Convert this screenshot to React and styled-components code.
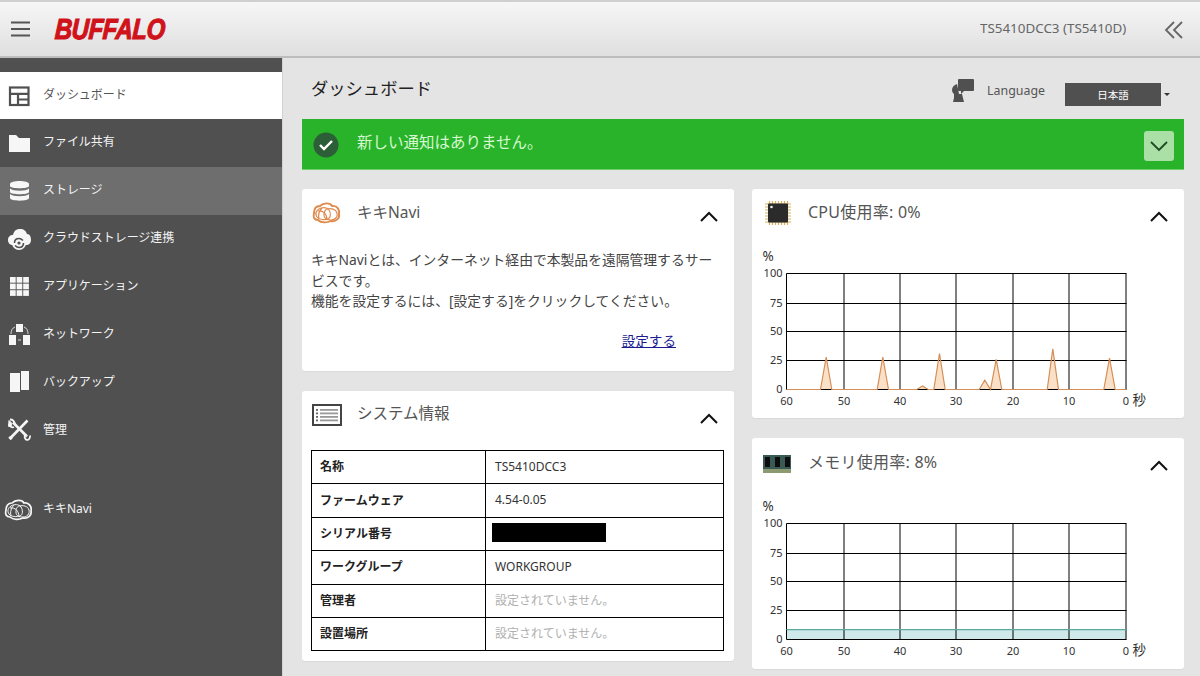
import React from 'react';
import styled, { createGlobalStyle } from 'styled-components';

const Global = createGlobalStyle`
  html, body { margin: 0; padding: 0; background: #e4e4e4; }
  body { font-family: "Noto Sans", "Noto Sans CJK JP", sans-serif; overflow: hidden; }
  * { box-sizing: border-box; }
`;

const Page = styled.div`
  width: 1200px; height: 676px; overflow: hidden;
  display: flex; flex-direction: column; background: #e4e4e4;
`;
const Header = styled.header`
  height: 58px; flex: none;
  display: flex; align-items: center;
  padding: 0 16px 0 11px;
  background: linear-gradient(#f6f6f6, #dfdfdf);
  border-top: 2px solid #cfcfcf;
  border-bottom: 2px solid #bdbdbd;
`;
const Burger = styled.svg`width: 19px; height: 16px; flex: none; margin-right: 25px;`;
const Logo = styled.span`
  font: italic 700 29px "Liberation Sans", sans-serif;
  color: #d0121b;
  -webkit-text-stroke: 1.2px #d0121b;
  letter-spacing: -0.4px;
  display: inline-block;
  transform-origin: left center;
  transform: scaleX(0.82) skewX(-4deg);
  width: 113px;
  white-space: nowrap;
`;
const Device = styled.div`
  margin-left: auto; margin-right: 38px; margin-top: -3px;
  width: 146px; overflow: hidden; white-space: nowrap;
  font-size: 13.4px; color: #666;
`;
const Collapse = styled.svg`width: 20px; height: 20px; flex: none; margin-top: 2px;`;
const Body = styled.div`flex: 1; display: flex; min-height: 0;`;
const Side = styled.nav`
  width: 283px; flex: none; background: #505050;
  border-right: 1px solid #d2d2d2;
  padding-top: 14px;
`;
const NavItem = styled.div`
  height: ${p => p.$active ? 47 : 48}px;
  display: flex; align-items: center; gap: 9px; padding-left: 4px;
  font-size: 12px; letter-spacing: -0.05px;
  background: ${p => p.$active ? '#fff' : p.$hover ? '#6e6e6e' : 'transparent'};
  color: ${p => p.$active ? '#555' : '#f4f4f4'};
`;
const NavLabel = styled.span`margin-bottom: 4px;`;
const NavGap = styled.div`height: 31px;`;
const IconSlot = styled.svg`width: 30px; height: 26px; flex: none;`;
const Main = styled.main`flex: 1; padding: 0 16px 0 19px; min-width: 0;`;
const TitleRow = styled.div`
  height: 61px; display: flex; align-items: center; padding: 0 14px 2px 9px;
`;
const Title = styled.h1`
  margin: 0; font-size: 17.3px; font-weight: 400; color: #222; flex: 1;
`;
const LangIcon = styled.svg`width: 22px; height: 23px; margin-right: 13px; margin-top: 5px;`;
const LangLabel = styled.span`font-size: 12.4px; color: #555; margin-right: 20px; margin-top: 5px;`;
const LangSelect = styled.div`
  width: 96px; height: 23px; background: #505050; color: #fff;
  font-size: 10.5px; display: flex; align-items: center; justify-content: center; margin-top: 14px;
`;
const Caret = styled.span`
  width: 0; height: 0; margin: 14px 0 0 3px;
  border-left: 3.5px solid transparent; border-right: 3.5px solid transparent; border-top: 3px solid #333;
`;
const Banner = styled.div`
  height: 51px; background: #28b32a; border-bottom: 1px solid #6fd06a;
  display: flex; align-items: center; padding: 0 10px 0 11px; color: #d6f7cf;
  font-size: 15.5px;
`;
const BannerText = styled.span`margin-left: 18px; margin-bottom: 6px; flex: 1;`;
const Check = styled.svg`width: 26px; height: 26px; flex: none; margin-top: 1px;`;
const Toggle = styled.div`
  width: 30px; height: 30px; background: #aadfa6; border-radius: 3px;
  display: flex; align-items: center; justify-content: center; margin-top: 3px;
`;
const Columns = styled.div`display: grid; grid-template-columns: 432px 432px; gap: 18px; margin-top: 19px;`;
const Col = styled.div`display: flex; flex-direction: column; gap: 20px;`;
const Card = styled.section`
  background: #fff; border-radius: 3px; box-shadow: 0 1px 1px rgba(0,0,0,.05);
  height: ${p => p.$h}px; overflow: hidden;
`;
const CardHead = styled.div`
  height: ${p => p.$h || 48}px; display: flex; padding: 0 14px 0 10px;
  align-items: flex-start;
`;
const CardIcon = styled.svg`width: 30px; height: 24px; flex: none; margin-top: 12px;`;
const CardTitle = styled.h2`
  margin: ${p => p.$top ?? 11}px 0 0 ${p => p.$wide ? 16 : 15}px;
  font-size: ${p => p.$wide ? 16 : 15.5}px;
  letter-spacing: ${p => p.$wide ? 0.25 : 0}px;
  font-weight: 400; color: #555; flex: 1; line-height: 24px;
`;
const Chevron = styled.svg`width: 22px; height: 14px; flex: none; margin-top: 20px;`;
const Para = styled.p`
  margin: 0; padding: 13px 14px 0 9px; font-size: 13.8px; line-height: 20.5px; color: #444;
`;
const LinkRow = styled.div`text-align: right; padding: 19.5px 58px 0 0; font-size: 13.6px; line-height: 20px;`;
const LinkText = styled.a`color: #1b1b8f; text-decoration: underline;`;
const Table = styled.table`
  border-collapse: collapse; margin-left: 9px; width: 413px; table-layout: fixed; font-size: 12px;
`;
const Row = styled.tr`height: 33.4px;`;
const Th = styled.th`
  width: 174px; border: 1px solid #000; text-align: left; padding: 0 0 2px 8px; font-weight: 700; color: #222;
`;
const Td = styled.td`
  border: 1px solid #000; padding: 0 0 2px 9px; color: ${p => p.$muted ? '#b0b0b0' : '#333'};
`;
const Redact = styled.div`width: 114px; height: 19px; background: #000; margin-left: -3px; margin-bottom: 1px;`;
const ChartSvg = styled.svg`display: block; width: 432px;`;
const AxisText = styled.text`font: 11px "Noto Sans", sans-serif; fill: #333;`;
const UnitText = styled.text`font: 13.5px "Noto Sans", "Noto Sans CJK JP", sans-serif; fill: #333;`;

const W = '#f6f6f6';
const D = '#505050';

const Knot = ({ c, w = 1 }) => (
  <g fill="none" stroke={c} strokeWidth={w}>
    <path d="M8 4c3-3 10-4 12 0 5-1 8 4 7 8 1 4-3 8-8 7-4 2-10 2-13-1-4 0-5-3-4-7 0-4 2-7 6-7z" strokeWidth={w + .7} />
    <path d="M7 7c3-2 8-2 10 1s2 8-1 9-9 1-11-2-1-6 2-8z" />
    <path d="M15 7c4-1 9 0 10 4s-2 7-6 7-7-1-7-5 1-5 3-6z" />
    <path d="M6 9c5-1 9 3 9 9M10 6c-3 3-4 7-3 11" />
  </g>
);

const Cloud = () => (
  <g>
    <path fill={W} d="M9 19c-3 0-5-2-5-5 0-3 2-5 5-5 1-4 3-6 7-6s6 2 7 5c3 0 4 3 4 6s-2 5-5 5z" />
    <circle cx="15" cy="17" r="7" fill={W} />
    <path fill="none" stroke={D} strokeWidth="1.6" d="M10.5 17c0-3 2-4.5 4.5-4.5 2 0 3 1 4 2M19.5 17c0 3-2 4.5-4.5 4.5-2 0-3-1-4-2" />
    <circle cx="15" cy="17" r="1.6" fill={D} />
  </g>
);

const Tools = () => (
  <g fill="none" stroke={W}>
    <path d="M23.5 2.5L7 19.5" strokeWidth="2.6" />
    <path d="M7.5 19L5.5 21" strokeWidth="3.4" />
    <path d="M9 4.5L23 18.5" strokeWidth="2.6" />
    <path d="M5 2.5l2.8 2.8-.6 2.6-2.6.6L5 2.5" fill={W} strokeWidth="1" />
    <path d="M11 6.5C10.5 3.5 8.5 1.5 6 1.5M5 6c.5 2.5 3 4 5 3" strokeWidth="1.8" />
    <path d="M26 17.5c.5 2.5-1 4.5-3.5 4.5M21.5 16.5c-1.500 1.500-1 4 1 5.500" strokeWidth="1.8" />
  </g>
);

const icons = {
  dash: <g fill="none" stroke={D} strokeWidth="2.2"><rect x="6" y="4.500" width="18.500" height="17.500" /><path d="M6 10.800h18.500M14 10.800V22M14 16.500h10.500" /></g>,
  folder: <path fill={W} d="M5 5h7l3 3h11v14H5z" />,
  db: <g fill={W}><path d="M6 6c0-4 19-4 19 0v2c0 3-19 3-19 0z" /><path d="M6 10.500c3 3 16 3 19 0v3.500c0 3-19 3-19 0z" /><path d="M6 16c3 3 16 3 19 0v4c0 3.500-19 3.500-19 0z" /></g>,
  cloud: <Cloud />,
  grid: <g fill={W}>{[0, 1, 2].flatMap(r => [0, 1, 2].map(c => <rect key={r + '-' + c} x={6 + c * 6.6} y={3 + r * 6.6} width="5.7" height="5.7" />))}</g>,
  net: <g><rect fill={W} x="12" y="2" width="7" height="8" /><rect fill={W} x="5" y="13" width="7" height="10" /><rect fill={W} x="19" y="13" width="7" height="10" /><path fill="none" stroke={W} strokeWidth=".8" d="M11 5c-3 1-4 4-4 7M20 5c3 1 4 4 4 7M14 18h3" /></g>,
  backup: <g fill={W}><rect x="6" y="3" width="10" height="19" /><rect x="17" y="1" width="8" height="19" /></g>,
  tools: <Tools />,
  knot: <g transform="translate(0 2)"><Knot c={W} /></g>,
};

const NAV = [
  ['dash', 'ダッシュボード', { $active: true }],
  ['folder', 'ファイル共有', {}],
  ['db', 'ストレージ', { $hover: true }],
  ['cloud', 'クラウドストレージ連携', {}],
  ['grid', 'アプリケーション', {}],
  ['net', 'ネットワーク', {}],
  ['backup', 'バックアップ', {}],
  ['tools', '管理', {}],
];

const NavEntry = ({ icon, label, ...p }) => (
  <NavItem {...p}>
    <IconSlot viewBox="0 0 30 26">{icons[icon]}</IconSlot>
    <NavLabel>{label}</NavLabel>
  </NavItem>
);

const Up = () => <Chevron viewBox="0 0 22 14"><path d="M3 12l8-8 8 8" fill="none" stroke="#111" strokeWidth="2" /></Chevron>;

const GX = [0, 57.5, 113.5, 169.5, 226.5, 282.5, 339.5];
const LX = ['60', '50', '40', '30', '20', '10', '0'];
const GY = [0, 30, 58, 87, 116];
const LY = ['100', '75', '50', '25', '0'];

const Chart = ({ values, line, fill, height }) => {
  const x0 = 34.5;
  const plotTop = 36;
  const pts = values.map((v, i) => [(i * 340) / 60, 116 - (v / 100) * 116]);
  const path = pts.map(p => p[0].toFixed(1) + ',' + p[1].toFixed(1)).join(' ');
  return (
    <ChartSvg viewBox={`0 0 432 ${height}`} height={height}>
      <g transform={`translate(${x0} ${plotTop + .5})`}>
        <polygon points={`0,116 ${path} 340,116`} fill={fill} />
        <g stroke="#000" strokeWidth="1" fill="none">
          {GX.map(x => <line key={x} x1={x} x2={x} y1="0" y2="116" />)}
          {GY.map(y => <line key={y} x1="0" x2="340" y1={y} y2={y} />)}
        </g>
        <polyline points={path} fill="none" stroke={line} strokeWidth="1.2" />
        {GY.map((y, i) => <AxisText key={i} x="-4" y={y + 3} textAnchor="end">{LY[i]}</AxisText>)}
        {GX.map((x, i) => <AxisText key={i} x={x} y="131" textAnchor="middle">{LX[i]}</AxisText>)}
        <UnitText x="-24" y="-13">%</UnitText>
        <UnitText x="346" y="131">秒</UnitText>
      </g>
    </ChartSvg>
  );
};

const peaks = { 53: 28, 43: 28, 36: 3, 33: 31, 25: 8, 23: 26, 13: 35, 3: 27 };
const cpu = Array.from({ length: 61 }, (_, i) => peaks[60 - i] || 0);
const mem = Array.from({ length: 61 }, () => 8.5);

const RowsData = [
  ['名称', 'TS5410DCC3'],
  ['ファームウェア', '4.54-0.05'],
  ['シリアル番号', null],
  ['ワークグループ', 'WORKGROUP'],
  ['管理者', '設定されていません。', true],
  ['設置場所', '設定されていません。', true],
];

const PINS = [0, 1, 2, 3, 4, 5, 6];

export default function App() {
  return (
    <Page>
      <Global />
      <Header>
        <Burger viewBox="0 0 19 16"><path d="M0 1.5h19M0 8h19M0 14.5h19" stroke="#555" strokeWidth="2" /></Burger>
        <Logo>BUFFALO</Logo>
        <Device>TS5410DCC3 (TS5410D)</Device>
        <Collapse viewBox="0 0 20 20"><path d="M10 2L2 10l8 8M18 2l-8 8 8 8" fill="none" stroke="#666" strokeWidth="1.8" /></Collapse>
      </Header>
      <Body>
        <Side>
          {NAV.map(([ic, label, p]) => <NavEntry key={label} icon={ic} label={label} {...p} />)}
          <NavGap />
          <NavEntry icon="knot" label="キキNavi" />
        </Side>
        <Main>
          <TitleRow>
            <Title>ダッシュボード</Title>
            <LangIcon viewBox="0 0 22 23">
              <path fill={D} d="M7 0h14a1 1 0 0 1 1 1v10a1 1 0 0 1-1 1H12l-3 3v-3H7a1 1 0 0 1-1-1V1a1 1 0 0 1 1-1z" />
              <path fill={D} d="M5 5C2 6 0 8 0 11c0 2 1 3 2 4v4l-1 4h11l-1-4-1-4H7z" />
            </LangIcon>
            <LangLabel>Language</LangLabel>
            <LangSelect>日本語</LangSelect>
            <Caret />
          </TitleRow>
          <Banner>
            <Check viewBox="0 0 26 26"><circle cx="13" cy="13" r="12.500" fill="#2c5f37" /><path d="M7 13l4 4 8-8" fill="none" stroke="#fff" strokeWidth="2.400" /></Check>
            <BannerText>新しい通知はありません。</BannerText>
            <Toggle><svg width="20" height="12" viewBox="0 0 20 12"><path d="M2 2l8 8 8-8" fill="none" stroke="#1d4a22" strokeWidth="1.800" /></svg></Toggle>
          </Banner>
          <Columns>
            <Col>
              <Card $h={182}>
                <CardHead>
                  <CardIcon viewBox="0 0 30 22"><Knot c="#e08a4c" w={1.2} /></CardIcon>
                  <CardTitle>キキNavi</CardTitle>
                  <Up />
                </CardHead>
                <Para>
                  キキNaviとは、インターネット経由で本製品を遠隔管理するサービスです。<br />
                  機能を設定するには、[設定する]をクリックしてください。
                </Para>
                <LinkRow><LinkText>設定する</LinkText></LinkRow>
              </Card>
              <Card $h={270}>
                <CardHead $h={59}>
                  <CardIcon viewBox="0 0 30 22">
                    <rect x="1" y="1" width="28" height="20" fill="#fff" stroke="#444" strokeWidth="2" />
                    {[5, 8.5, 12, 15.5].map(y => <g key={y}><rect x="4" y={y} width="2" height="1.8" fill="#666" /><rect x="8" y={y} width="18" height="1.8" fill="#999" /></g>)}
                  </CardIcon>
                  <CardTitle $top={10}>システム情報</CardTitle>
                  <Up />
                </CardHead>
                <Table>
                  <tbody>
                    {RowsData.map(([k, v, m]) => (
                      <Row key={k}><Th>{k}</Th><Td $muted={m}>{v === null ? <Redact /> : v}</Td></Row>
                    ))}
                  </tbody>
                </Table>
              </Card>
            </Col>
            <Col>
              <Card $h={229}>
                <CardHead>
                  <CardIcon viewBox="0 0 30 24">
                    <g stroke="#d4b060" strokeWidth="1.200">
                      {PINS.map(i => <g key={i}><line x1={7.500 + i * 3} x2={7.500 + i * 3} y1="0" y2="24" /><line x1="3" x2="29" y1={3 + i * 3} y2={3 + i * 3} /></g>)}
                    </g>
                    <rect x="6" y="2.500" width="20" height="19" rx="1" fill="#2b2b2b" />
                    <circle cx="9.500" cy="6" r="1.300" fill="#eee" />
                  </CardIcon>
                  <CardTitle $wide>CPU使用率: 0%</CardTitle>
                  <Up />
                </CardHead>
                <Chart values={cpu} line="#d48f58" fill="#fbe0c8" height={181} />
              </Card>
              <Card $h={231}>
                <CardHead $h={49}>
                  <CardIcon viewBox="0 0 30 24">
                    <rect x="1" y="5" width="28" height="14" fill="#3a5a55" />
                    <rect x="1" y="19" width="28" height="4" fill="#8c9a72" />
                    {[3, 13, 23].map(x => <rect key={x} x={x} y="7" width="5" height="10" fill="#0d0d0d" />)}
                  </CardIcon>
                  <CardTitle $wide $top={12}>メモリ使用率: 8%</CardTitle>
                  <Up />
                </CardHead>
                <Chart values={mem} line="#5ba89e" fill="#cfe9ea" height={182} />
              </Card>
            </Col>
          </Columns>
        </Main>
      </Body>
    </Page>
  );
}
